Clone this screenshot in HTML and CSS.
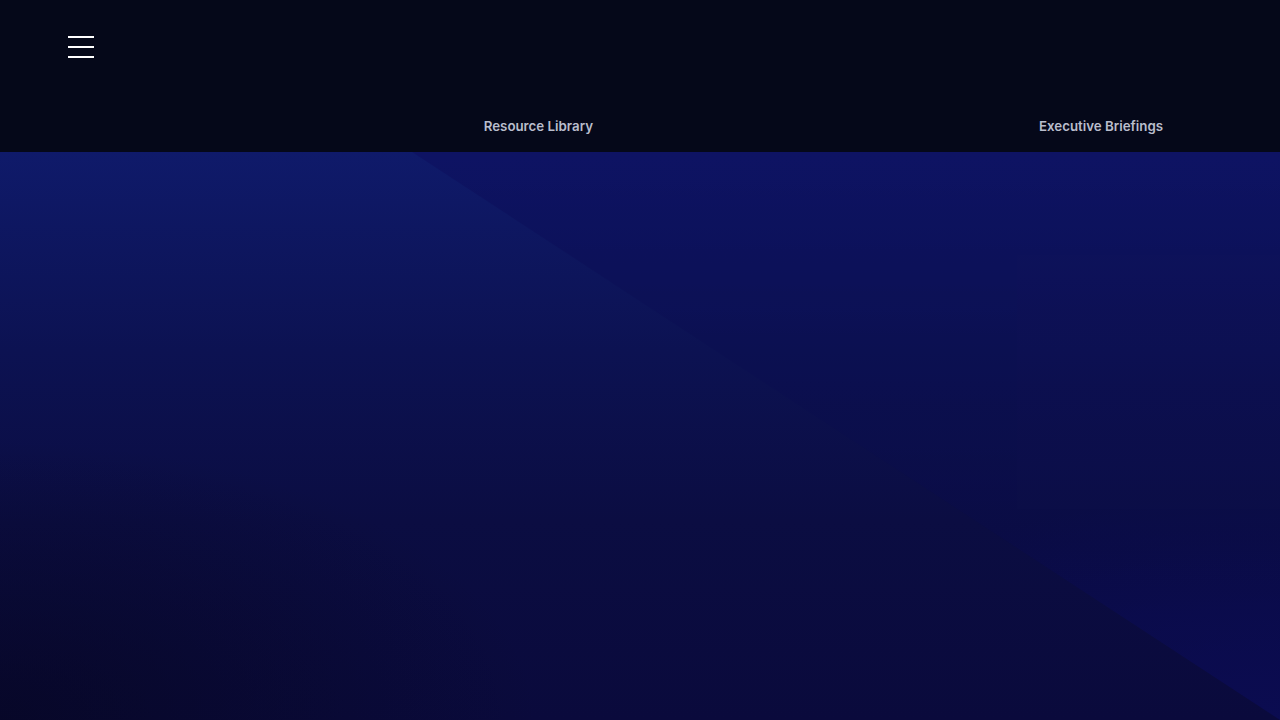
FILE: index.html
```html
<!DOCTYPE html>
<html lang="en">

<head>
    <meta charset="UTF-8" />
    <meta name="viewport" content="width=device-width, initial-scale=1.0" />
    <title>Resource Library</title>
    <link rel="stylesheet" href="styles.css">
</head>

<body>
    <header class="site-header">
        <button class="menu-toggle" aria-label="Open menu">
            <span></span>
            <span></span>
            <span></span>
        </button>
        <nav class="main-nav">
            <a href="#" class="nav-link">Resource Library</a>
            <a href="#" class="nav-link">Executive Briefings</a>
        </nav>
    </header>

    <section class="hero-section"></section>
</body>

</html>
```

FILE: styles.css
```css
:root {
    --header-bg: #050819;
    --nav-text: #b9bdcc;
}

* {
    margin: 0;
    padding: 0;
    box-sizing: border-box;
}

body {
    font-family: 'Inter', 'Roboto', sans-serif;
    background: var(--header-bg);
    overflow: hidden;
}

.site-header {
    height: 152px;
    background: var(--header-bg);
    display: flex;
    flex-direction: column;
    padding: 36px 0 0 68px;
}

.menu-toggle {
    width: 26px;
    height: 22px;
    background: none;
    border: none;
    display: flex;
    flex-direction: column;
    justify-content: space-between;
    cursor: pointer;
}

.menu-toggle span {
    display: block;
    width: 26px;
    height: 2px;
    background: #ffffff;
}

.main-nav {
    display: flex;
    justify-content: flex-end;
    gap: 446px;
    padding-right: 117px;
    margin-top: 60px;
}

.nav-link {
    color: var(--nav-text);
    font-size: 13.3px;
    font-weight: 600;
    text-decoration: none;
}

.hero-section {
    position: relative;
    height: 568px;
    background:
        radial-gradient(ellipse 60% 70% at 0% 100%, rgba(6, 6, 32, 0.7), transparent 70%),
        linear-gradient(180deg, #0f1a6a 0%, #0c1252 35%, #0b0d42 65%, #0a0a3c 100%);
}

.hero-section::after {
    content: "";
    position: absolute;
    inset: 0;
    clip-path: polygon(32.2% 0, 100% 0, 100% 100%);
    opacity: 0.6;
    background:
        radial-gradient(ellipse 50% 50% at 100% 100%, rgba(12, 14, 96, 0.9), transparent 80%),
        linear-gradient(180deg, #0e1060 0%, #0c0f50 40%, #0b0d48 70%, #0b0c55 100%);
}
```
